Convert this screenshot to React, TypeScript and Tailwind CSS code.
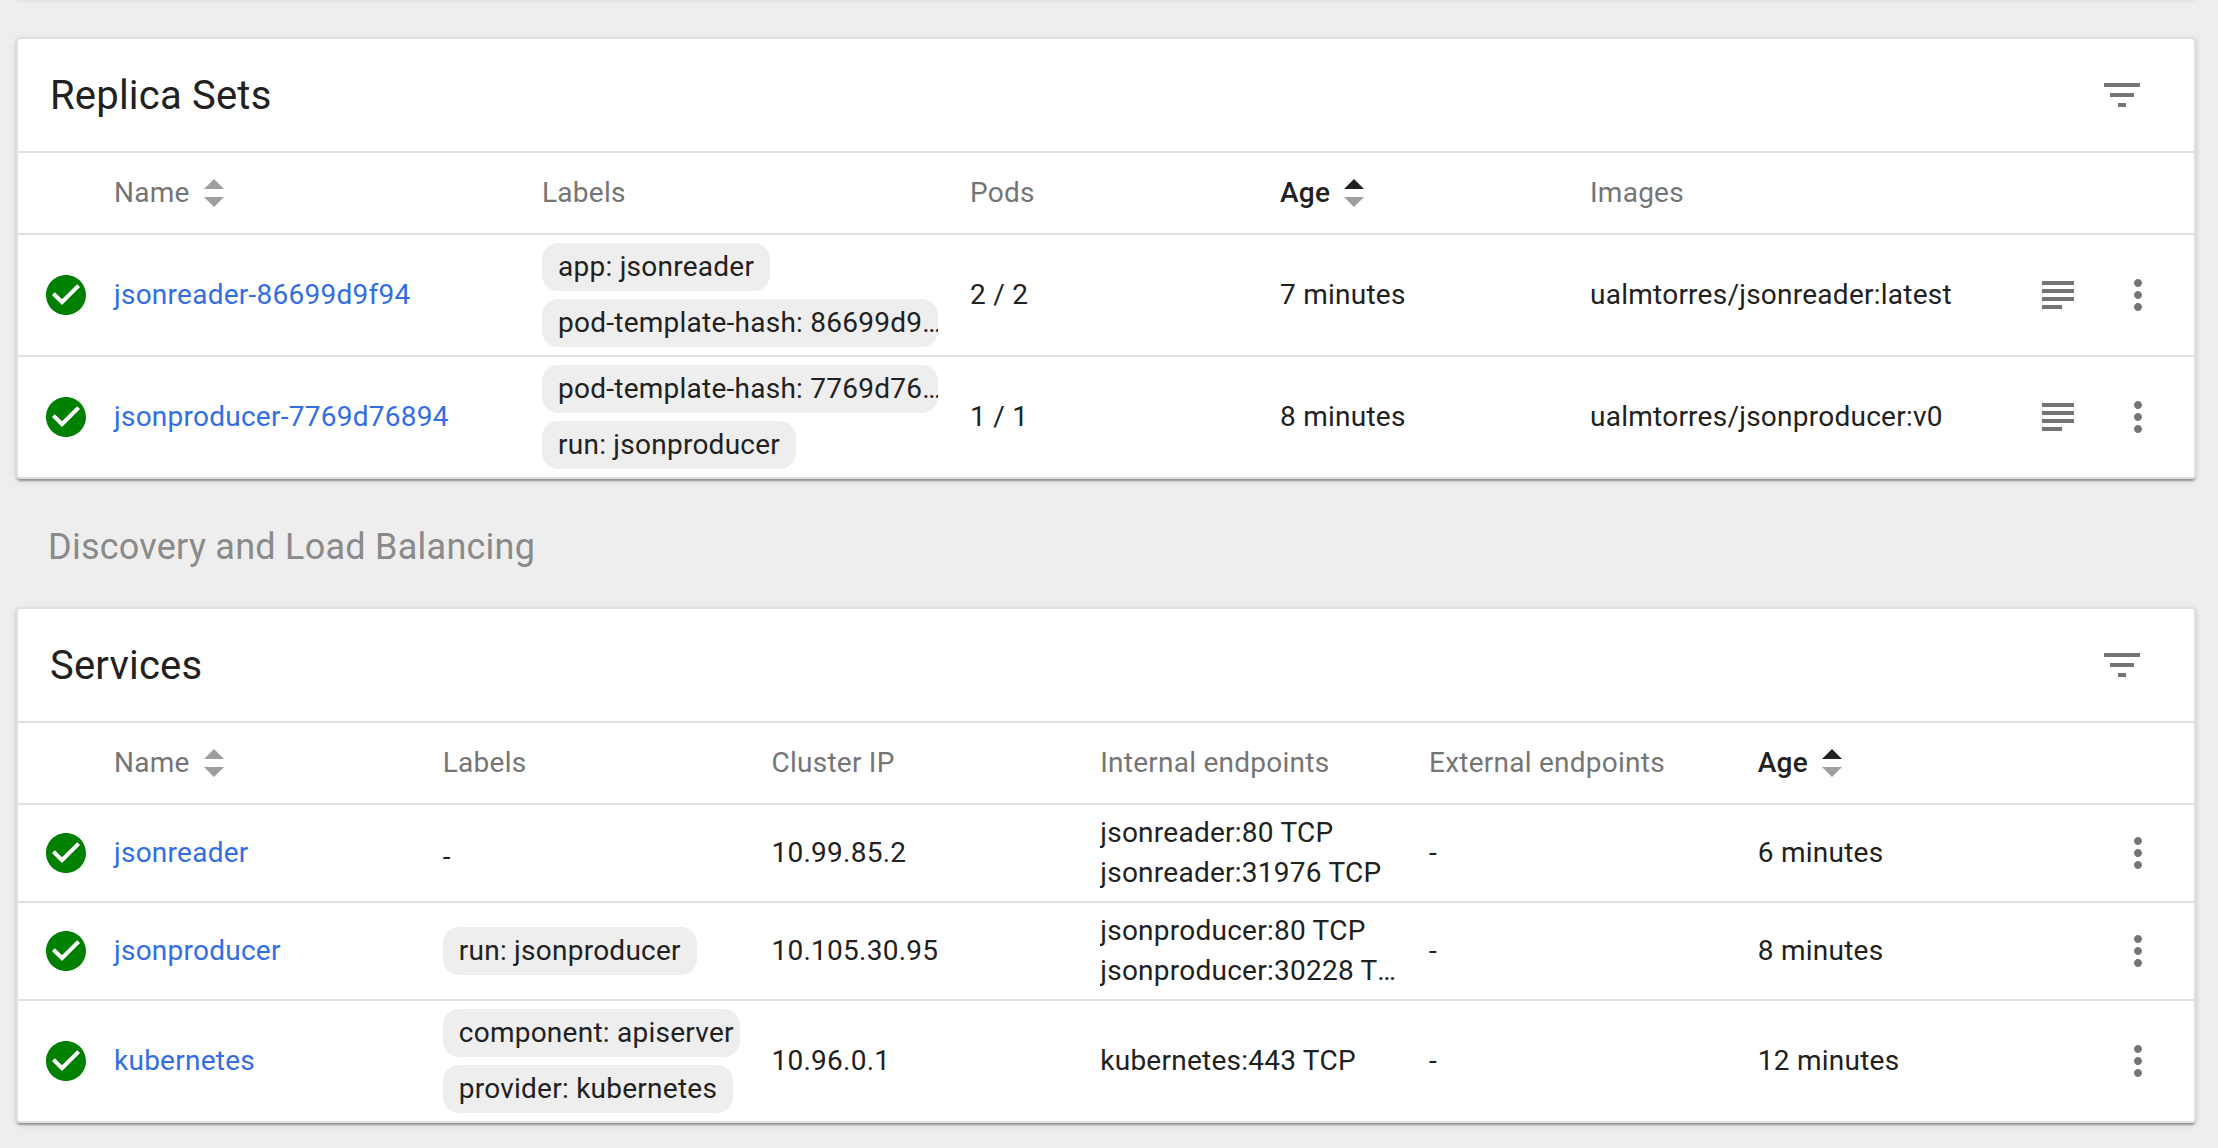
import React from "react";

function CheckIcon() {
  return (
    <svg viewBox="0 0 24 24" className="size-12 fill-[#008000]">
      <path d="M12 2C6.48 2 2 6.48 2 12s4.48 10 10 10 10-4.48 10-10S17.52 2 12 2zm-2 15l-5-5 1.41-1.41L10 14.17l7.59-7.59L19 8l-9 9z" />
    </svg>
  );
}

function FilterIcon() {
  return (
    <svg viewBox="0 0 24 24" className="size-12 fill-[#757575]">
      <path d="M10 18h4v-2h-4v2zM3 6v2h18V6H3zm3 7h12v-2H6v2z" />
    </svg>
  );
}

function LogsIcon() {
  return (
    <svg viewBox="0 0 24 24" className="size-12 fill-[#757575]">
      <path d="M4 5h16v2H4zM4 9h16v2H4zM4 13h16v2H4zM4 17h10v2H4z" />
    </svg>
  );
}

function MoreIcon() {
  return (
    <svg viewBox="0 0 24 24" className="size-12 fill-[#757575]">
      <path d="M12 8c1.1 0 2-.9 2-2s-.9-2-2-2-2 .9-2 2 .9 2 2 2zm0 2c-1.1 0-2 .9-2 2s.9 2 2 2 2-.9 2-2-.9-2-2-2zm0 6c-1.1 0-2 .9-2 2s.9 2 2 2 2-.9 2-2-.9-2-2-2z" />
    </svg>
  );
}

function SortIcon({ active = false }: { active?: boolean }) {
  return (
    <svg viewBox="0 0 20 28" className="ml-3.5 h-7 w-5">
      <path d="M0 10h20L10 0z" className={active ? "fill-[#212121]" : "fill-[#9e9e9e]"} />
      <path d="M0 18h20L10 28z" className="fill-[#9e9e9e]" />
    </svg>
  );
}

type Column = { title: string; sort?: "idle" | "active"; width: string };

const replicaColumns: Column[] = [
  { title: "Name", sort: "idle", width: "w-[428px]" },
  { title: "Labels", width: "w-[428px]" },
  { title: "Pods", width: "w-[310px]" },
  { title: "Age", sort: "active", width: "w-[310px]" },
  { title: "Images", width: "w-[428px]" },
];

const serviceColumns: Column[] = [
  { title: "Name", sort: "idle", width: "w-[328.75px]" },
  { title: "Labels", width: "w-[328.75px]" },
  { title: "Cluster IP", width: "w-[328.75px]" },
  { title: "Internal endpoints", width: "w-[328.75px]" },
  { title: "External endpoints", width: "w-[328.75px]" },
  { title: "Age", sort: "active", width: "w-[328.75px]" },
];

type Cell = string | string[] | { labels: string[] };
type Row = { cells: Cell[]; height: string; logs?: boolean };

const replicaRows: Row[] = [
  {
    height: "h-[120px]",
    logs: true,
    cells: [
      "jsonreader-86699d9f94",
      { labels: ["app: jsonreader", "pod-template-hash: 86699d9f94"] },
      "2 / 2",
      "7 minutes",
      "ualmtorres/jsonreader:latest",
    ],
  },
  {
    height: "h-[120px]",
    logs: true,
    cells: [
      "jsonproducer-7769d76894",
      { labels: ["pod-template-hash: 7769d76894", "run: jsonproducer"] },
      "1 / 1",
      "8 minutes",
      "ualmtorres/jsonproducer:v0",
    ],
  },
];

const serviceRows: Row[] = [
  {
    height: "h-24",
    cells: [
      "jsonreader",
      { labels: [] },
      "10.99.85.2",
      ["jsonreader:80 TCP", "jsonreader:31976 TCP"],
      "-",
      "6 minutes",
    ],
  },
  {
    height: "h-24",
    cells: [
      "jsonproducer",
      { labels: ["run: jsonproducer"] },
      "10.105.30.95",
      ["jsonproducer:80 TCP", "jsonproducer:30228 TCP"],
      "-",
      "8 minutes",
    ],
  },
  {
    height: "h-[120px]",
    cells: [
      "kubernetes",
      { labels: ["component: apiserver", "provider: kubernetes"] },
      "10.96.0.1",
      ["kubernetes:443 TCP"],
      "-",
      "12 minutes",
    ],
  },
];

function CellContent({ cell, link, labelWidth }: { cell: Cell; link: boolean; labelWidth: string }) {
  if (typeof cell === "string") {
    return link ? <a className="text-[#326de6]">{cell}</a> : <span>{cell}</span>;
  }
  if (Array.isArray(cell)) {
    return (
      <div className="leading-10">
        {cell.map((line) => (
          <div key={line} className="truncate">{line}</div>
        ))}
      </div>
    );
  }
  if (cell.labels.length === 0) return <div className="pt-2">-</div>;
  return (
    <div className="flex flex-col items-start gap-2">
      {cell.labels.map((label) => (
        <div key={label} className="h-12 max-w-full overflow-hidden rounded-2xl bg-[#eeeeee] px-4 leading-[48px]">
          <div className={`${labelWidth} w-max truncate`}>{label}</div>
        </div>
      ))}
    </div>
  );
}

function ResourceCard({
  title,
  columns,
  rows,
  labelWidth,
}: {
  title: string;
  columns: Column[];
  rows: Row[];
  labelWidth: string;
}) {
  return (
    <section className="rounded-[4px] border-2 border-[#e0e0e0] bg-white shadow-[0_4px_2px_-2px_rgba(0,0,0,0.2),0_2px_2px_0_rgba(0,0,0,0.14),0_2px_6px_0_rgba(0,0,0,0.12)]">
      <header className="flex h-28 items-center justify-between pr-12 pl-8">
        <h2 className="pt-0.5 text-[40px] tracking-[0.2px]">{title}</h2>
        <FilterIcon />
      </header>
      <div className="flex h-[82px] items-center border-t-2 border-[#e0e0e0] pl-24 text-[#757575]">
        {columns.map((c) => (
          <div key={c.title} className={`${c.width} flex shrink-0 items-center`}>
            <span className={c.sort === "active" ? "font-medium text-[#212121]" : ""}>{c.title}</span>
            {c.sort && <SortIcon active={c.sort === "active"} />}
          </div>
        ))}
      </div>
      {rows.map((row, r) => (
        <div key={r} className="flex items-center border-t-2 border-[#e0e0e0] pr-8 pl-6">
          <div className={`${row.height} flex w-[72px] items-center`}>
            <CheckIcon />
          </div>
          {row.cells.map((cell, i) => (
            <div key={i} className={`${columns[i].width} shrink-0 pr-8`}>
              <CellContent cell={cell} link={i === 0} labelWidth={labelWidth} />
            </div>
          ))}
          <div className="ml-auto flex gap-8">
            {row.logs && <LogsIcon />}
            <MoreIcon />
          </div>
        </div>
      ))}
    </section>
  );
}

export default function App() {
  return (
    <div className="h-[1148px] w-[2218px] overflow-hidden bg-[#eeeeee] pr-[22px] pl-4 font-['Roboto',sans-serif] text-[28px] leading-10 tracking-[0.25px] whitespace-nowrap text-[#212121]">
      <div className="-mt-[19px] mb-10 h-4 rounded-[4px] border-2 border-[#e0e0e0] bg-white shadow-[0_4px_2px_-2px_rgba(0,0,0,0.2),0_2px_2px_0_rgba(0,0,0,0.14),0_2px_6px_0_rgba(0,0,0,0.12)]" />
      <ResourceCard title="Replica Sets" columns={replicaColumns} rows={replicaRows} labelWidth="max-w-[388px]" />
      <div className="flex h-32 items-center pt-2 pl-8 text-[36px] text-[#8a8a8a]">Discovery and Load Balancing</div>
      <ResourceCard title="Services" columns={serviceColumns} rows={serviceRows} labelWidth="max-w-[288px]" />
    </div>
  );
}
